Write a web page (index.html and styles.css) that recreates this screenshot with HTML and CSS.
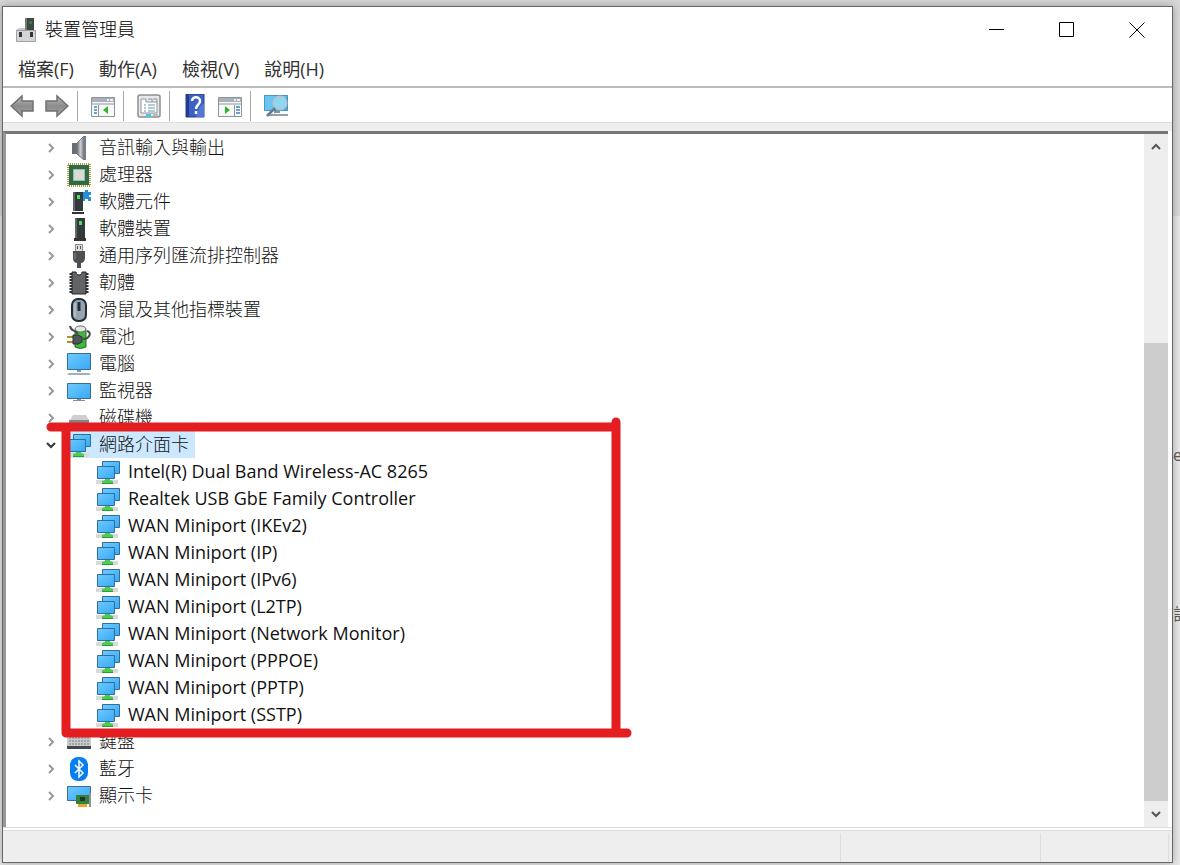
FILE: index.html
```html
<!DOCTYPE html>
<html lang="zh-Hant">
<head>
    <meta charset="UTF-8">
    <meta name="viewport" content="width=device-width, initial-scale=1.0">
    <title>裝置管理員</title>
    <link rel="stylesheet" href="styles.css">
</head>
<body>
    <svg class="sprite" aria-hidden="true">
        <defs>
            <linearGradient id="screen" x1="0" y1="0" x2="1" y2="1">
                <stop offset="0" stop-color="#6fcbff"/><stop offset="1" stop-color="#38a8f4"/>
            </linearGradient>
            <linearGradient id="metal" x1="0" y1="0" x2="1" y2="0">
                <stop offset="0" stop-color="#6b7075"/><stop offset=".5" stop-color="#c9cdd1"/><stop offset="1" stop-color="#777c82"/>
            </linearGradient>
            <linearGradient id="arrow" x1="0" y1="0" x2="0" y2="1">
                <stop offset="0" stop-color="#bbb"/><stop offset=".5" stop-color="#8b8b8b"/><stop offset="1" stop-color="#a5a5a5"/>
            </linearGradient>
        </defs>
        <symbol id="chevron" viewBox="0 0 10 10"><path d="M3 1l4 4-4 4" fill="none" stroke="currentColor" stroke-width="2"/></symbol>
        <symbol id="network" viewBox="0 0 24 24">
            <path d="M6.500 1.500h17v12h-17z" fill="url(#screen)" stroke="#2f6f9e"/>
            <path d="M1.500 6.500h17v12h-17z" fill="url(#screen)" stroke="#2f6f9e"/>
            <path d="M0 20h22v4H0z" fill="#d8dada"/>
            <path d="M9 19h5v1l3 1v3H6v-3l3-1z" fill="#4ccc52"/><path d="M6 23.500h11" stroke="#2f9a3a"/>
        </symbol>
        <symbol id="monitor" viewBox="0 0 24 24">
            <path d="M.5 4.500h23v15H.5z" fill="url(#screen)" stroke="#3b6c92"/>
            <path d="M10 20h4v1h4v1H6v-1h4z" fill="#7d93a5"/>
        </symbol>
    </svg>

    <main class="window">
        <header class="titlebar">
            <svg class="app-icon" viewBox="0 0 20 24">
                <path d="M9 0h9v14H9z" fill="#414843"/><path d="M9 0h2v14H9z" fill="#777"/><path d="M13 3h3v3h-3z" fill="#36784a"/>
                <path d="M0 12l3-2h6v3h8l3-1v11H0z" fill="#c6c8ca"/><path d="M.5 12.500h19v11H.5z" fill="#d2d4d6" stroke="#a0a2a5"/>
                <path d="M3 14h3v5H3zM14 14h3v5h-3z" fill="#33363a"/>
            </svg>
            <h1>裝置管理員</h1>
            <button class="control" aria-label="最小化"><svg viewBox="0 0 16 16"><path d="M0 7.500h15"/></svg></button>
            <button class="control" aria-label="最大化"><svg viewBox="0 0 16 16"><path d="M.5.5h14v14H.5z"/></svg></button>
            <button class="control" aria-label="關閉"><svg viewBox="0 0 16 16"><path d="M.5.5l15 15M15.500.5l-15 15"/></svg></button>
        </header>

        <nav class="menubar">
            <button>檔案(F)</button>
            <button>動作(A)</button>
            <button>檢視(V)</button>
            <button>說明(H)</button>
        </nav>

        <div class="toolbar">
            <button aria-label="上一頁"><svg viewBox="0 0 24 24"><path d="M1 12L12 2v5h11v10H12v5z" fill="url(#arrow)" stroke="#707070" stroke-width="1.500"/></svg></button>
            <button aria-label="下一頁"><svg viewBox="0 0 24 24"><path d="M23 12L12 2v5H1v10h11v5z" fill="url(#arrow)" stroke="#707070" stroke-width="1.500"/></svg></button>
            <span class="separator"></span>
            <button aria-label="顯示主控台樹狀目錄"><svg viewBox="0 0 24 24">
                <path d="M.5 3.500h23v19H.5z" fill="#f8f9fa" stroke="#8b949c"/><path d="M1 4h22v4H1z" fill="#a9b2ba"/><path d="M16 5h2v2h-2zM19 5h3v2h-3z" fill="#eee"/>
                <path d="M1 10h22M7.500 11v11" stroke="#8b949c"/><path d="M3 13h3M3 16h3M3 19h3" stroke="#3e84b8" stroke-width="1.500"/>
                <path d="M17 12v8l-5-4z" fill="#36b32c"/>
            </svg></button>
            <span class="separator"></span>
            <button aria-label="內容"><svg viewBox="0 0 24 24">
                <rect x="1" y="1" width="22" height="22" rx="2" fill="#e9e9e9" stroke="#8e8e8e" stroke-width="1.500"/>
                <path d="M4 5h5v3h11v11H4z" fill="#fff" stroke="#8996a0"/><path d="M11 5h4v3M16 5h4v3" fill="none" stroke="#8996a0"/>
                <path d="M7 11h2M11 11h7M7 14h2M11 14h7M7 17h2M11 17h7" stroke="#6a94ae"/><path d="M9 20h5v3H9z" fill="#48c8e8"/><path d="M16 20h5v2h-5z" fill="#bbb"/>
            </svg></button>
            <span class="separator"></span>
            <button aria-label="說明"><svg viewBox="0 0 24 24">
                <path d="M3 0h18v23H3z" fill="#3d60c4" stroke="#263e8c"/><path d="M3 0h3v23H3z" fill="#233b8d"/><path d="M16 14l5-5v14h-8z" fill="#5278d3"/>
                <path d="M9 7c0-5 8-5 8 0 0 4-4 3.500-4 8M13 17v3" fill="none" stroke="#fff" stroke-width="2.500"/>
            </svg></button>
            <button aria-label="顯示動作窗格"><svg viewBox="0 0 24 24">
                <path d="M.5 3.500h23v19H.5z" fill="#f8f9fa" stroke="#8b949c"/><path d="M1 4h22v4H1z" fill="#a9b2ba"/><path d="M16 5h2v2h-2zM19 5h3v2h-3z" fill="#eee"/>
                <path d="M1 10h22M16.500 11v11" stroke="#8b949c"/><path d="M18 13h4M18 16h4M18 19h4" stroke="#3e84b8" stroke-width="1.500"/>
                <path d="M7 12v8l5-4z" fill="#36b32c"/>
            </svg></button>
            <span class="separator"></span>
            <button aria-label="掃描硬體變更"><svg viewBox="0 0 24 24">
                <path d="M0 1h24v16H0z" fill="#43a9df"/><path d="M0 1h24L8 17H0z" fill="#69c5ef"/><path d="M.5 1.500h23v15H.5z" fill="none" stroke="#4a96c0"/>
                <path d="M10 17h6v2h-6z" fill="#7f929f"/><path d="M5 20h19v2H5z" fill="#91a2ae"/>
                <circle cx="16" cy="9" r="6.500" fill="#8ed8f5" stroke="#b1c6d2" stroke-width="2"/><path d="M11 14l-8 8" stroke="#657b8b" stroke-width="2.500"/>
            </svg></button>
        </div>

        <section class="content">
            <ul class="tree">
                <li><div class="row"><button class="expander" aria-label="展開"><svg><use href="#chevron"/></svg></button>
                    <svg class="icon" viewBox="0 0 24 24"><path d="M5 7h5v11H5z" fill="#676d73"/><path d="M10 7l7-7v24l-7-6z" fill="url(#metal)" stroke="#747980"/><path d="M17 0h2v24h-2z" fill="#777d84"/></svg>
                    <span>音訊輸入與輸出</span></div></li>
                <li><div class="row"><button class="expander" aria-label="展開"><svg><use href="#chevron"/></svg></button>
                    <svg class="icon" viewBox="0 0 24 24"><path d="M1 1h22v22H1z" fill="none" stroke="#a89c3c" stroke-width="2" stroke-dasharray="1 1"/><path d="M2 2h20v20H2z" fill="#2c6b43"/><path d="M6.500 6.500h11v11h-11z" fill="#d8dad8" stroke="#a5b5a8"/></svg>
                    <span>處理器</span></div></li>
                <li><div class="row"><button class="expander" aria-label="展開"><svg><use href="#chevron"/></svg></button>
                    <svg class="icon" viewBox="0 0 24 24"><path d="M15 2h3V0h3v2h3v3h-2v2h2v4h-3V9h-3v2h-3z" fill="#258ed8"/><path d="M6 2h10v19H6z" fill="#343a3c"/><path d="M6 2h2v19H6z" fill="#626768"/><path d="M10 5h3v4h-3z" fill="#46e35b"/><path d="M5 22h12v2H5z" fill="#333"/></svg>
                    <span>軟體元件</span></div></li>
                <li><div class="row"><button class="expander" aria-label="展開"><svg><use href="#chevron"/></svg></button>
                    <svg class="icon" viewBox="0 0 24 24"><path d="M8 1h10v20H8z" fill="#343a3c"/><path d="M8 1h2v20H8z" fill="#626768"/><path d="M12 4h3v4h-3z" fill="#46e35b"/><path d="M7 21h12v3H7z" fill="#333"/></svg>
                    <span>軟體裝置</span></div></li>
                <li><div class="row"><button class="expander" aria-label="展開"><svg><use href="#chevron"/></svg></button>
                    <svg class="icon" viewBox="0 0 24 24"><path d="M8.500.5h7v7h-7z" fill="#ddd" stroke="#8c8c8c"/><path d="M10 2h1v3h-1zM13 2h1v3h-1z" fill="#555"/><path d="M6 7h12v7c0 3-2 5-4 5v5h-4v-5c-3 0-4-3-4-5z" fill="#4e5153"/><path d="M8 9v6" stroke="#8a8e91"/></svg>
                    <span>通用序列匯流排控制器</span></div></li>
                <li><div class="row"><button class="expander" aria-label="展開"><svg><use href="#chevron"/></svg></button>
                    <svg class="icon" viewBox="0 0 24 24"><path d="M4 2v21M20 2v21" stroke="#303336" stroke-width="3" stroke-dasharray="2 1"/><path d="M5 1h4c0 4 6 4 6 0h4v22H5z" fill="#626568" stroke="#232629"/></svg>
                    <span>韌體</span></div></li>
                <li><div class="row"><button class="expander" aria-label="展開"><svg><use href="#chevron"/></svg></button>
                    <svg class="icon" viewBox="0 0 24 24"><rect x="5" y="1" width="14" height="22" rx="6" fill="#93a4b0" stroke="#252c32" stroke-width="2"/><path d="M8 5v14" stroke="#c9d4dc"/><path d="M12 4v9" stroke="#272e35" stroke-width="3"/></svg>
                    <span>滑鼠及其他指標裝置</span></div></li>
                <li><div class="row"><button class="expander" aria-label="展開"><svg><use href="#chevron"/></svg></button>
                    <svg class="icon" viewBox="0 0 24 24"><path d="M8 5v17q5 3 11 0V5z" fill="#41b83c" stroke="#226d27"/><ellipse cx="13.500" cy="4" rx="5.500" ry="3" fill="#e3e9e3" stroke="#666"/><path d="M3 1c1 6 5 3 8 8M16 14c7 0 9-7 4-8" fill="none" stroke="#464b4e" stroke-width="2"/><path d="M0 12h7M0 17h7" stroke="#aa922c" stroke-width="2"/><path d="M6 10h5l4 2v5l-4 2H6z" fill="#50575a" stroke="#292e31"/></svg>
                    <span>電池</span></div></li>
                <li><div class="row"><button class="expander" aria-label="展開"><svg><use href="#chevron"/></svg></button>
                    <svg class="icon" viewBox="0 0 24 24"><path d="M.5 1.500h23v16H.5z" fill="url(#screen)" stroke="#3b6c92"/><path d="M10 18h4v2h-4z" fill="#839aab"/><path d="M2 21h20l2 2H0z" fill="#9bb0c0"/></svg>
                    <span>電腦</span></div></li>
                <li><div class="row"><button class="expander" aria-label="展開"><svg><use href="#chevron"/></svg></button>
                    <svg class="icon"><use href="#monitor"/></svg>
                    <span>監視器</span></div></li>
                <li><div class="row"><button class="expander" aria-label="展開"><svg><use href="#chevron"/></svg></button>
                    <svg class="icon" viewBox="0 0 24 24"><path d="M6 9h13l3 5H3z" fill="#cfcfd1"/><path d="M2 14h20v5H2z" fill="#828488"/></svg>
                    <span>磁碟機</span></div></li>
                <li><div class="row open"><button class="expander" aria-label="摺疊"><svg><use href="#chevron"/></svg></button>
                    <div class="selected"><svg class="icon"><use href="#network"/></svg>
                    <span>網路介面卡</span></div></div>
                    <ul class="children">
                        <li class="row"><svg class="icon"><use href="#network"/></svg><span>Intel(R) Dual Band Wireless-AC 8265</span></li>
                        <li class="row"><svg class="icon"><use href="#network"/></svg><span>Realtek USB GbE Family Controller</span></li>
                        <li class="row"><svg class="icon"><use href="#network"/></svg><span>WAN Miniport (IKEv2)</span></li>
                        <li class="row"><svg class="icon"><use href="#network"/></svg><span>WAN Miniport (IP)</span></li>
                        <li class="row"><svg class="icon"><use href="#network"/></svg><span>WAN Miniport (IPv6)</span></li>
                        <li class="row"><svg class="icon"><use href="#network"/></svg><span>WAN Miniport (L2TP)</span></li>
                        <li class="row"><svg class="icon"><use href="#network"/></svg><span>WAN Miniport (Network Monitor)</span></li>
                        <li class="row"><svg class="icon"><use href="#network"/></svg><span>WAN Miniport (PPPOE)</span></li>
                        <li class="row"><svg class="icon"><use href="#network"/></svg><span>WAN Miniport (PPTP)</span></li>
                        <li class="row"><svg class="icon"><use href="#network"/></svg><span>WAN Miniport (SSTP)</span></li>
                    </ul>
                </li>
                <li><div class="row"><button class="expander" aria-label="展開"><svg><use href="#chevron"/></svg></button>
                    <svg class="icon" viewBox="0 0 24 24"><path d="M0 5h24v13H0z" fill="#c9ccce"/><path d="M2 8h20M2 11h20M2 14h20" stroke="#7b8084" stroke-dasharray="2 1"/><path d="M0 16h24v3H0z" fill="#43484c"/></svg>
                    <span>鍵盤</span></div></li>
                <li><div class="row"><button class="expander" aria-label="展開"><svg><use href="#chevron"/></svg></button>
                    <svg class="icon" viewBox="0 0 24 24"><rect x="3" width="18" height="24" rx="8" fill="#087ff0"/><path d="M8 8l8 8-4 4V4l4 4-8 8" fill="none" stroke="#fff" stroke-width="1.500"/></svg>
                    <span>藍牙</span></div></li>
                <li><div class="row"><button class="expander" aria-label="展開"><svg><use href="#chevron"/></svg></button>
                    <svg class="icon" viewBox="0 0 24 24"><path d="M.5 2.500h23v14H.5z" fill="url(#screen)" stroke="#3b6c92"/><path d="M23 9v14" stroke="#8d9496" stroke-width="2"/><path d="M9 11h13v9H9z" fill="#367f3f"/><path d="M13 13h5v4h-5z" fill="#173d27"/><path d="M11 20h9v3h-9z" fill="#e3a82c"/></svg>
                    <span>顯示卡</span></div></li>
            </ul>

            <div class="scrollbar">
                <button class="up" aria-label="向上捲動"><svg><use href="#chevron"/></svg></button>
                <div class="track"><div class="thumb"></div></div>
                <button class="down" aria-label="向下捲動"><svg><use href="#chevron"/></svg></button>
            </div>

            <svg class="marker" viewBox="0 0 588 324" aria-hidden="true">
                <path d="M7 12H569M572 7V315M22 12V318M23 318H583"/>
            </svg>
        </section>

        <footer class="statusbar"><span></span><span></span><span></span></footer>
    </main>

    <aside class="behind"><span>e</span><span>計</span></aside>
</body>
</html>
```
FILE: styles.css
```css
* {
    box-sizing: border-box;
}

body {
    display: flex;
    margin: 0;
    height: 100vh;
    padding: 6px 0 2px 2px;
    overflow: hidden;
    background: linear-gradient(#d8d8d8 216px, #e8e8e8 216px);
    color: #111;
    font-family: "Open Sans", "Noto Sans CJK TC", sans-serif;
    font-size: 18px;
}

button {
    display: flex;
    align-items: center;
    justify-content: center;
    padding: 0;
    border: 0;
    background: none;
    color: inherit;
    font: inherit;
}

ul {
    margin: 0;
    padding: 0;
    list-style: none;
}

.sprite {
    position: absolute;
    width: 0;
    height: 0;
}

.window {
    display: flex;
    flex: 1;
    flex-direction: column;
    min-width: 0;
    border: 1px solid #666;
    background: #fff;
    box-shadow: 0 0 8px rgba(0, 0, 0, 0.3);
}

.titlebar {
    display: flex;
    align-items: center;
    height: 45px;
    padding-left: 13px;
}

.app-icon {
    width: 20px;
    height: 24px;
}

h1 {
    flex: 1;
    margin: 0 0 0 9px;
    padding-bottom: 4px;
    color: #000;
    font-size: 18px;
    font-weight: 300;
}

.control {
    width: 70px;
    height: 45px;
}

.control svg {
    width: 16px;
    height: 16px;
    fill: none;
    stroke: #000;
}

.menubar {
    display: flex;
    gap: 25px;
    height: 36px;
    padding: 0 15px 2px;
    border-bottom: 2px solid #bbb;
    color: #333;
}

.toolbar {
    display: flex;
    align-items: center;
    gap: 1px;
    height: 35px;
    padding: 1px 2px 0;
    border-bottom: 1px solid #ddd;
}

.toolbar button {
    width: 34px;
    height: 32px;
}

.toolbar svg {
    width: 24px;
    height: 24px;
}

.separator {
    width: 1px;
    height: 30px;
    margin: 0 7px 0 2px;
    background: #aaa;
}

.content {
    position: relative;
    display: flex;
    flex: 1;
    min-height: 0;
    padding-right: 4px;
    border-top: 8px solid #eee;
    border-bottom: 1px solid #ddd;
}

.tree {
    flex: 1;
    min-width: 0;
    padding-left: 36px;
    border-top: 3px solid #777;
    border-left: 3px solid #999;
    font-weight: 300;
}

.row {
    display: flex;
    align-items: center;
    height: 27px;
    white-space: nowrap;
}

.row span {
    margin-left: 8px;
    padding-bottom: 2px;
    line-height: 24px;
}

.icon {
    flex: none;
    width: 24px;
    height: 24px;
}

.expander {
    width: 18px;
    height: 27px;
    margin-right: 7px;
    color: #999;
}

.expander svg,
.scrollbar svg {
    width: 10px;
    height: 10px;
}

.open .expander svg {
    color: #333;
    transform: rotate(90deg);
}

.selected {
    display: flex;
    align-items: center;
    height: 27px;
    padding-right: 6px;
    background: #cce8ff;
}

.children {
    padding-left: 54px;
    font-weight: 400;
}

.scrollbar {
    display: flex;
    flex-direction: column;
    width: 24px;
    border-top: 3px solid #777;
    background: #eee;
}

.scrollbar button {
    width: 24px;
    height: 26px;
    color: #555;
}

.up svg {
    transform: rotate(-90deg);
}

.down svg {
    transform: rotate(90deg);
}

.track {
    display: flex;
    flex: 1;
    align-items: flex-end;
}

.thumb {
    width: 100%;
    height: 71.5%;
    background: #ccc;
}

/* hand-drawn box round the network adapters */
.marker {
    position: absolute;
    top: 284px;
    left: 41px;
    width: 588px;
    height: 324px;
    fill: none;
    stroke: #e41e20;
    stroke-width: 9;
    stroke-linecap: round;
}

.statusbar {
    display: grid;
    grid-template-columns: 1fr 200px 128px;
    height: 32px;
    margin-top: 2px;
    padding-right: 3px;
    border-top: 1px solid #ddd;
    background: #eee;
}

.statusbar span {
    margin-top: 2px;
    border-right: 1px solid #ddd;
}

.behind {
    display: flex;
    flex-direction: column;
    gap: 135px;
    width: 7px;
    padding-top: 437px;
    overflow: hidden;
    color: #555;
    font-size: 16px;
    line-height: 24px;
}
```
